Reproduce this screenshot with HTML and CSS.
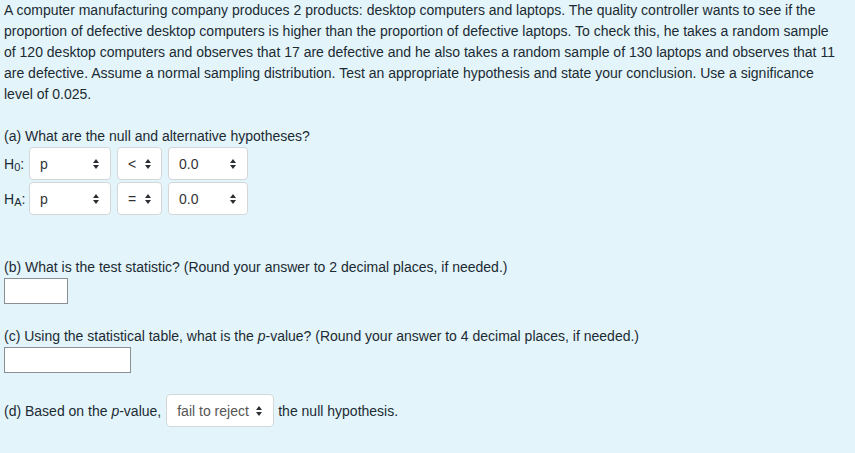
FILE: index.html
```html
<!DOCTYPE html>
<html>
<head>
<meta charset="utf-8">
<link rel="stylesheet" href="styles.css">
</head>
<body>
<div class="page">
  <p class="intro">A computer manufacturing company produces 2 products: desktop computers and laptops. The quality controller wants to see if the proportion of defective desktop computers is higher than the proportion of defective laptops. To check this, he takes a random sample of 120 desktop computers and observes that 17 are defective and he also takes a random sample of 130 laptops and observes that 11 are defective. Assume a normal sampling distribution. Test an appropriate hypothesis and state your conclusion. Use a significance level of 0.025.</p>

  <p class="q qa">(a) What are the null and alternative hypotheses?</p>
  <div class="hyp">
    <div class="hrow">
      <span class="hlabel">H<sub>0</sub>:</span>
      <div class="sel w1"><span>p</span><svg class="arr" viewBox="0 0 6 10"><path d="M3 0L6 4H0Z M0 6H6L3 10Z"/></svg></div>
      <div class="sel w2"><span>&lt;</span><svg class="arr" viewBox="0 0 6 10"><path d="M3 0L6 4H0Z M0 6H6L3 10Z"/></svg></div>
      <div class="sel w3"><span>0.0</span><svg class="arr" viewBox="0 0 6 10"><path d="M3 0L6 4H0Z M0 6H6L3 10Z"/></svg></div>
    </div>
    <div class="hrow">
      <span class="hlabel">H<sub>A</sub>:</span>
      <div class="sel w1"><span>p</span><svg class="arr" viewBox="0 0 6 10"><path d="M3 0L6 4H0Z M0 6H6L3 10Z"/></svg></div>
      <div class="sel w2"><span>=</span><svg class="arr" viewBox="0 0 6 10"><path d="M3 0L6 4H0Z M0 6H6L3 10Z"/></svg></div>
      <div class="sel w3"><span>0.0</span><svg class="arr" viewBox="0 0 6 10"><path d="M3 0L6 4H0Z M0 6H6L3 10Z"/></svg></div>
    </div>
  </div>

  <p class="q qb">(b) What is the test statistic? (Round your answer to 2 decimal places, if needed.)</p>
  <div class="box small"></div>

  <p class="q qc">(c) Using the statistical table, what is the <i>p</i>-value? (Round your answer to 4 decimal places, if needed.)</p>
  <div class="box wide"></div>

  <div class="qd">
    <span>(d) Based on the <i>p</i>-value,</span>
    <div class="sel w4"><span>fail to reject</span><svg class="arr" viewBox="0 0 6 10"><path d="M3 0L6 4H0Z M0 6H6L3 10Z"/></svg></div>
    <span>the null hypothesis.</span>
  </div>
</div>
</body>
</html>
```
FILE: styles.css
```css
html, body {
  margin: 0;
  padding: 0;
  background: #e3f5fa;
}
body {
  width: 855px;
  height: 453px;
  overflow: hidden;
  font-family: "Liberation Sans", Arial, sans-serif;
  font-size: 14px;
  color: #1c2a33;
}
.page {
  padding: 0 4px;
}
p {
  margin: 0;
  line-height: 21px;
}
.intro {
  width: 838px;
}
.qa {
  margin-top: 21px;
}
.hyp {
  display: flex;
  flex-direction: column;
  gap: 2px;
}
.hrow {
  display: flex;
  align-items: center;
  gap: 6px;
}
.hlabel {
  width: 22px;
  margin-right: -3px;
  white-space: nowrap;
}
.hlabel sub {
  font-size: 11px;
  vertical-align: -2px;
  line-height: 0;
}
.sel {
  box-sizing: border-box;
  height: 33px;
  background: #fff;
  border: 1px solid #d3d7da;
  border-radius: 4px;
  display: flex;
  align-items: center;
  justify-content: space-between;
  padding: 0 11px 0 10px;
  color: #333;
  font-size: 14px;
}
.arr {
  width: 6px;
  height: 10px;
  fill: #2b2f33;
}
.w1 { width: 82px; }
.w2 { width: 45px; padding-right: 10px; }
.w3 { width: 80px; }
.w4 { width: 108px; padding-left: 10px; color: #555; }
.qb {
  margin-top: 42px;
}
.box {
  box-sizing: border-box;
  height: 26px;
  background: #fff;
  border: 1px solid #8a8f93;
}
.small { width: 64px; }
.wide { width: 127px; }
.qc {
  margin-top: 22px;
}
.qd {
  margin-top: 21px;
  display: flex;
  align-items: center;
  gap: 5px;
}
.qd .sel + span {
  margin-left: -1px;
}
```
